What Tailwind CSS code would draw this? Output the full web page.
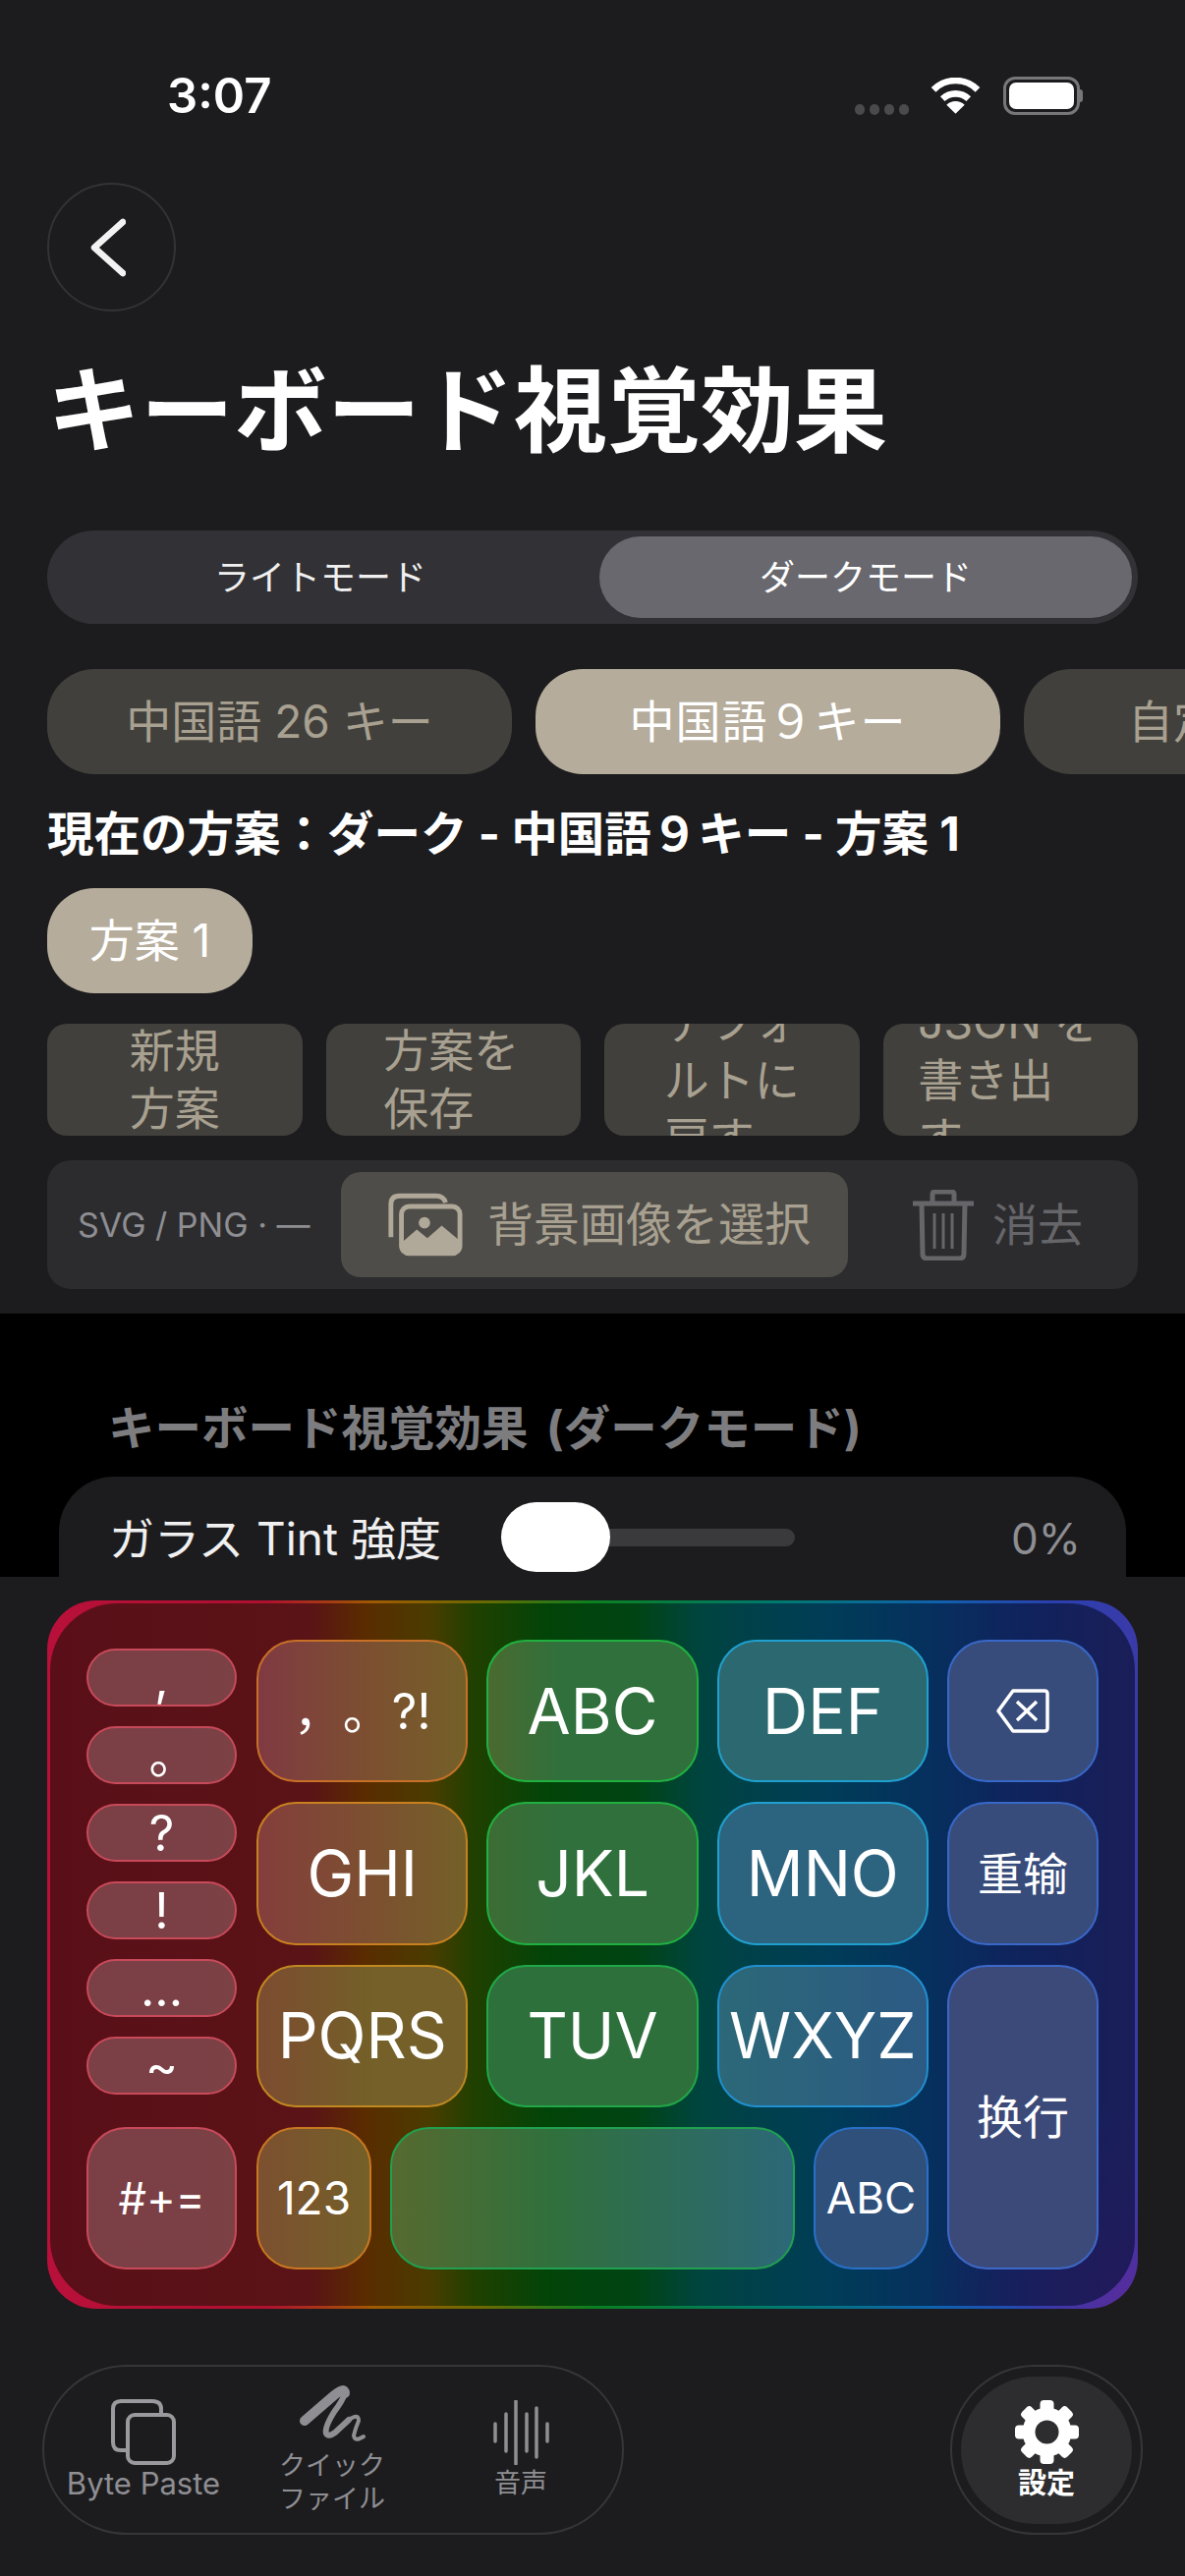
<!DOCTYPE html>
<html lang="ja">
<head>
<meta charset="UTF-8">
<title>キーボード視覚効果</title>
<script src="https://cdn.jsdelivr.net/npm/@tailwindcss/browser@4"></script>
</head>
<body class="bg-[#1c1c1e] w-[1206px] h-[2622px] overflow-hidden text-white font-['Inter','Noto_Sans_CJK_JP','Noto_Sans_CJK_SC',sans-serif]">
  <!-- Status bar -->
  <div class="h-[186px] pt-[70px] pl-[170px] pr-[104px] flex justify-between items-start">
    <span class="text-[49px] leading-[56px] font-semibold">3:07</span>
    <div class="flex items-center mt-[8px]">
      <div class="flex gap-[5px] mt-[27px]">
        <i class="w-[10px] h-[11px] rounded-full bg-[#4a4a4c]"></i><i class="w-[10px] h-[11px] rounded-full bg-[#4a4a4c]"></i><i class="w-[10px] h-[11px] rounded-full bg-[#4a4a4c]"></i><i class="w-[10px] h-[11px] rounded-full bg-[#4a4a4c]"></i>
      </div>
      <svg class="ml-[22px]" width="51" height="37" viewBox="0 0 50 36" fill="none" stroke="white" stroke-width="6.5"><path d="M3 12 A31 31 0 0 1 47 12"/><path d="M12 21 A19 19 0 0 1 38 21"/><path d="M25 36 L16 27 A13 13 0 0 1 34 27 Z" fill="white" stroke="none"/></svg>
      <div class="flex items-center ml-[23px]">
        <div class="w-[78px] h-[39px] rounded-[12px] border-[3px] border-[#77777a] p-[3px]"><div class="w-full h-full bg-white rounded-[7px]"></div></div>
        <div class="w-[3px] h-[13px] bg-[#77777a] rounded-r-full"></div>
      </div>
    </div>
  </div>

  <div class="px-[48px]">
    <!-- Back button -->
    <div class="w-[131px] h-[131px] rounded-full border-2 border-[#333336] flex items-center justify-center">
      <svg class="mr-[8px]" width="36" height="60" viewBox="0 0 36 60" fill="none" stroke="#f2f2f2" stroke-width="6.5" stroke-linecap="round" stroke-linejoin="round"><path d="M33 4 L4 30 L33 56"/></svg>
    </div>

    <h1 class="mt-[49px] text-[95px] leading-[106px] font-bold whitespace-nowrap">キーボード視覚効果</h1>

    <!-- Mode toggle -->
    <div class="mt-[68px] w-[1110px] h-[95px] rounded-[48px] bg-[#323236] p-[6px] flex text-[36px]">
      <div class="w-[556px] pr-[12px] flex items-center justify-center text-[#f0f0f0]">ライトモード</div>
      <div class="w-[542px] rounded-[42px] bg-[#68686e] flex items-center justify-center">ダークモード</div>
    </div>

    <!-- Layout tabs -->
    <div class="mt-[46px] flex gap-[24px] w-[1158px] overflow-hidden text-[46px]">
      <div class="w-[473px] h-[107px] shrink-0 rounded-[48px] bg-[#41403c] text-[#a8a090] flex items-center justify-center">中国語 26 キー</div>
      <div class="w-[473px] h-[107px] shrink-0 rounded-[48px] bg-[#b5ac9b] tracking-[1px] flex items-center justify-center">中国語９キー</div>
      <div class="w-[473px] h-[107px] shrink-0 rounded-[48px] bg-[#41403c] text-[#a8a090] pl-[106px] flex items-center whitespace-nowrap">自定義キー</div>
    </div>

    <p class="mt-[31px] text-[47.5px] leading-[60px] font-bold whitespace-nowrap">現在の方案：ダーク - 中国語９キー - 方案 1</p>

    <div class="mt-[25px] w-[209px] h-[107px] rounded-[48px] bg-[#b5ac9b] flex items-center justify-center text-[46px]">方案 1</div>

    <!-- Actions -->
    <div class="mt-[31px] w-[1110px] grid grid-cols-4 gap-[24px] text-[#a8a090] text-[46px] leading-[59px]">
      <div class="h-[114px] rounded-[20px] bg-[#41403c] overflow-hidden flex items-center justify-center text-left"><span class="w-[92px]">新規<br>方案</span></div>
      <div class="h-[114px] rounded-[20px] bg-[#41403c] overflow-hidden flex items-center justify-center text-left"><span class="w-[142px]">方案を<br>保存</span></div>
      <div class="h-[114px] rounded-[20px] bg-[#41403c] overflow-hidden flex items-center justify-center text-left"><span class="w-[138px] shrink-0">デフォ<br>ルトに<br>戻す</span></div>
      <div class="h-[114px] rounded-[20px] bg-[#41403c] overflow-hidden flex items-center justify-center text-left"><span class="w-[188px] shrink-0 whitespace-nowrap">JSON を<br>書き出<br>す</span></div>
    </div>

    <!-- Background picker -->
    <div class="mt-[25px] w-[1110px] h-[131px] rounded-[24px] bg-[#2c2c2e] flex items-center pl-[31px]">
      <span class="w-[268px] text-[#8e8e93] text-[34px] whitespace-nowrap">SVG / PNG · —</span>
      <div class="w-[516px] h-[107px] rounded-[20px] bg-[#4e4d49] text-[#a8a090] text-[47px] flex items-center pl-[44px] gap-[25px]">
        <svg width="80" height="65" viewBox="0 0 82 66" fill="none" stroke="#b0a898" stroke-width="5"><path d="M7 46 V12 Q7 3 16 3 H54 Q62 3 64 10"/><rect x="18" y="14" width="61" height="49" rx="8"/><circle cx="42" cy="31" r="6" fill="#b0a898" stroke="none"/><path d="M18 62 V52 L34 38 L45 47 L60 34 L79 50 V62 Z" fill="#b0a898" stroke="none"/></svg>
        <span class="whitespace-nowrap">背景画像を選択</span>
      </div>
      <div class="ml-[66px] flex items-center gap-[19px] text-[#66666a] text-[46px]">
        <svg width="62" height="72" viewBox="0 0 62 72" fill="none" stroke="#66666a" stroke-width="5"><path d="M0 14 H62"/><path d="M20 12 V5 Q20 2 23 2 H39 Q42 2 42 5 V12"/><path d="M9 14 L10 65 Q10 70 15 70 H47 Q52 70 52 65 L53 14"/><path d="M22 24 V60 M31 24 V60 M40 24 V60" stroke-width="3"/></svg>
        <span class="whitespace-nowrap">消去</span>
      </div>
    </div>
  </div>

  <!-- Settings panel behind the keyboard -->
  <div class="mt-[25px] h-[268px] bg-black overflow-hidden pt-[89px] px-[60px]">
    <p class="pl-[50px] text-[47.5px] leading-[56px] font-bold text-[#7d7d80] whitespace-nowrap">キーボード視覚効果 <span class="ml-[7px]">(ダークモード)</span></p>
    <div class="mt-[21px] h-[140px] w-[1086px] rounded-t-[56px] bg-[#1c1c1e] flex items-start pt-[30px] pl-[51px]">
      <span class="w-[399px] text-[46px] leading-[66px] text-[#f0f0f0] whitespace-nowrap">ガラス Tint 強度</span>
      <div class="relative w-[299px] h-[18px] mt-[23px] rounded-[9px] bg-[#3a3a3c]">
        <div class="absolute left-0 top-[-27px] w-[111px] h-[71px] rounded-full bg-white"></div>
      </div>
      <span class="ml-[220px] text-[#8e8e93] text-[44px] leading-[66px]">0%</span>
    </div>
  </div>

  <!-- Keyboard -->
  <div class="mt-[24px] mx-[48px] w-[1110px] h-[721px] rounded-[50px] overflow-hidden p-[3px] bg-[radial-gradient(circle_at_100%_100%,#5a2a9a_0%,transparent_10%),linear-gradient(90deg,#b8103a_0%,#b0102f_20%,#a05a00_30%,#6a6a00_40%,#0a8020_50%,#007a70_67%,#1060b0_82%,#2a40b0_92%,#3a3aa8_100%)]">
    <div class="h-full rounded-[68px] p-[37px] flex gap-[20px] text-[64px] leading-none bg-[radial-gradient(circle_at_100%_100%,#221a5c_0%,transparent_16%),linear-gradient(90deg,#5a0f18_0%,#5a1316_24%,#5a2c00_29%,#4a3c00_35%,#204000_39%,#024408_46%,#004414_54%,#004440_60%,#003c58_72%,#06305e_81%,#10225c_90%,#1a1e58_100%)]">
      <!-- punctuation column -->
      <div class="w-[153px] shrink-0 flex flex-col justify-between">
        <div class="mt-[9px] flex flex-col gap-[20px] text-[50px]">
          <div class="h-[59px] rounded-[30px] bg-white/20 border-2 border-[#c84a5a] flex items-center justify-center">,</div>
          <div class="h-[59px] rounded-[30px] bg-white/20 border-2 border-[#c84a5a] flex items-center justify-center"><span class="translate-x-[12px]">。</span></div>
          <div class="h-[59px] rounded-[30px] bg-white/20 border-2 border-[#c84a5a] flex items-center justify-center">?</div>
          <div class="h-[59px] rounded-[30px] bg-white/20 border-2 border-[#c84a5a] flex items-center justify-center">!</div>
          <div class="h-[59px] rounded-[30px] bg-white/20 border-2 border-[#c84a5a] flex items-center justify-center">...</div>
          <div class="h-[59px] rounded-[30px] bg-white/20 border-2 border-[#c84a5a] flex items-center justify-center">~</div>
        </div>
        <div class="h-[145px] rounded-[40px] bg-white/20 border-2 border-[#c84a5a] flex items-center justify-center text-[45px]">#+=</div>
      </div>
      <!-- main keys -->
      <div class="w-[684px] shrink-0 grid grid-rows-4 gap-[20px]">
        <div class="grid grid-cols-3 gap-[19px]">
          <div class="rounded-[40px] bg-[linear-gradient(90deg,#803a42,#7c5030_55%,#746028)] border-2 border-[#c87028] flex items-center justify-center text-[50px] [text-spacing-trim:space-all]">，。?!</div>
          <div class="rounded-[40px] bg-[linear-gradient(90deg,#4a6a30,#30703c_35%)] border-2 border-[#20b040] flex items-center justify-center">ABC</div>
          <div class="rounded-[40px] bg-[#2c6870] border-2 border-[#20a0d0] flex items-center justify-center">DEF</div>
        </div>
        <div class="grid grid-cols-3 gap-[19px]">
          <div class="rounded-[40px] bg-[linear-gradient(90deg,#843e3c,#7c5030_55%,#746028)] border-2 border-[#c88020] flex items-center justify-center">GHI</div>
          <div class="rounded-[40px] bg-[linear-gradient(90deg,#3c6c34,#30703c_35%)] border-2 border-[#20b040] flex items-center justify-center">JKL</div>
          <div class="rounded-[40px] bg-[#2c6480] border-2 border-[#20a0d0] flex items-center justify-center">MNO</div>
        </div>
        <div class="grid grid-cols-3 gap-[19px]">
          <div class="rounded-[40px] bg-[linear-gradient(90deg,#7c4c30,#746028_55%)] border-2 border-[#c08820] flex items-center justify-center">PQRS</div>
          <div class="rounded-[40px] bg-[#2e703c] border-2 border-[#20a848] flex items-center justify-center">TUV</div>
          <div class="rounded-[40px] bg-[linear-gradient(90deg,#2c6878,#2c5a84)] border-2 border-[#2090d0] flex items-center justify-center">WXYZ</div>
        </div>
        <div class="flex gap-[19px]">
          <div class="w-[117px] rounded-[40px] bg-[linear-gradient(90deg,#7c5030,#746028)] border-2 border-[#c87820] flex items-center justify-center text-[46px]">123</div>
          <div class="flex-1 rounded-[40px] bg-[linear-gradient(90deg,#566a30,#30703c_40%,#2c6878)] border-2 border-[#20a050]"></div>
          <div class="w-[117px] rounded-[40px] bg-[#30507c] border-2 border-[#2870c8] flex items-center justify-center text-[44px]">ABC</div>
        </div>
      </div>
      <!-- right column -->
      <div class="w-[154px] shrink-0 ml-[-1px] grid grid-rows-4 gap-[20px]">
        <div class="rounded-[40px] bg-[#384c7c] border-2 border-[#3868c8] flex items-center justify-center">
          <svg width="54" height="45" viewBox="0 0 54 45" fill="none" stroke="white" stroke-width="3.5" stroke-linejoin="round"><path d="M17 2 H49 Q52 2 52 5 V40 Q52 43 49 43 H17 L2 22.5 Z"/><path d="M21 13 L41 32 M41 13 L21 32"/></svg>
        </div>
        <div class="rounded-[40px] bg-[#384c7c] border-2 border-[#3868c8] flex items-center justify-center text-[46px]">重输</div>
        <div class="row-span-2 rounded-[40px] bg-[#3c4a7a] border-2 border-[#3c68c8] flex items-center justify-center text-[47px]">换行</div>
      </div>
    </div>
  </div>

  <!-- Tab bar -->
  <div class="mt-[57px] pl-[43px] pr-[43px] flex justify-between items-start">
    <div class="w-[592px] h-[173px] rounded-[86px] border-2 border-[#363638] flex items-center pl-[5px] text-[#8e8e93] text-[27px] leading-[34px]">
      <div class="w-[192px] flex flex-col items-center">
        <svg width="66" height="67" viewBox="0 0 66 67" fill="none" stroke="#9a9a9e" stroke-width="4"><path d="M15 52 H10 Q2 52 2 44 V10 Q2 2 10 2 H42 Q51 2 51 10 V14"/><rect x="17" y="16" width="47" height="49" rx="7"/></svg>
        <span class="mt-[2px] text-[31px] whitespace-nowrap">Byte Paste</span>
      </div>
      <div class="w-[192px] flex flex-col items-center text-center">
        <svg width="67" height="61" viewBox="0 0 67 61" fill="none" stroke="#8e8e93" stroke-linecap="round" stroke-linejoin="round"><path d="M5 37 L34 12 Q46 2 46 9" stroke-width="10"/><path d="M46 9 Q44 16 35 28 Q25 44 27 50 Q29 54 36 49 L50 36" stroke-width="6"/><path d="M50 36 Q60 29 60 37 Q57 44 55 52 Q56 59 65 53" stroke-width="4"/></svg>
        <span class="mt-[5px]">クイック<br>ファイル</span>
      </div>
      <div class="w-[192px] flex flex-col items-center">
        <svg width="57" height="66" viewBox="0 0 57 66" fill="none" stroke="#8e8e93" stroke-width="3.5" stroke-linecap="round"><path d="M2 24 V42 M13 14 V52 M23 1 V65 M34 14 V52 M44 8 V58 M55 24 V42"/></svg>
        <span class="mt-[2px]">音声</span>
      </div>
    </div>
    <div class="w-[196px] h-[173px] rounded-[86px] border-2 border-[#363638] flex items-center justify-center">
      <div class="w-[174px] h-[150px] rounded-[75px] bg-[#2d2d30] flex flex-col items-center justify-center text-[29px] font-semibold leading-[34px]">
        <svg width="67" height="67" viewBox="0 0 67 67" fill="white">
          <circle cx="33.5" cy="33.5" r="25"/>
          <rect x="26.5" y="1" width="14" height="65" rx="4"/>
          <rect x="26.5" y="1" width="14" height="65" rx="4" transform="rotate(45 33.5 33.5)"/>
          <rect x="26.5" y="1" width="14" height="65" rx="4" transform="rotate(90 33.5 33.5)"/>
          <rect x="26.5" y="1" width="14" height="65" rx="4" transform="rotate(135 33.5 33.5)"/>
          <circle cx="33.5" cy="33.5" r="12" fill="#2d2d30"/>
        </svg>
        <span class="mt-[2px]">設定</span>
      </div>
    </div>
  </div>
</body>
</html>
